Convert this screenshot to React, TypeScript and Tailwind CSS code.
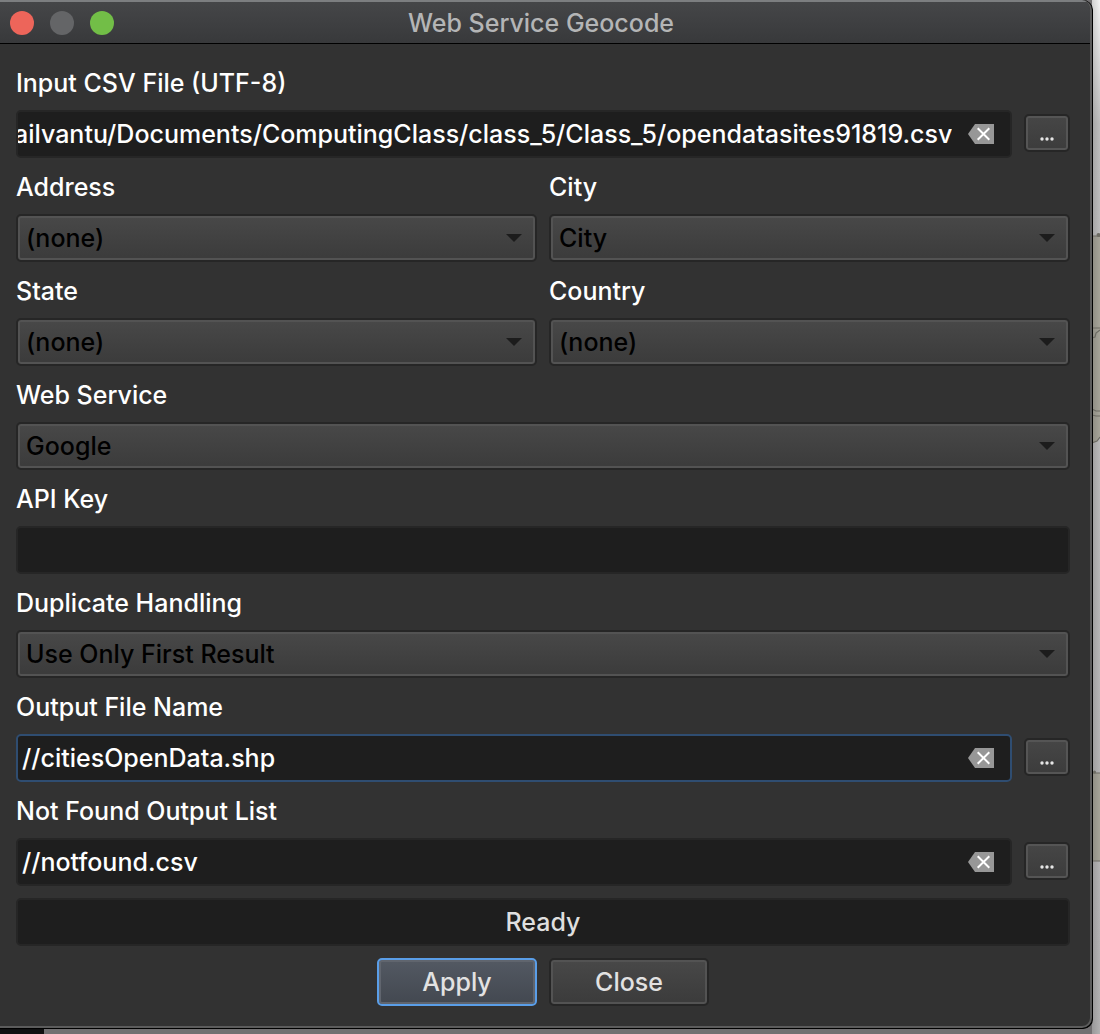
import { useEffect, useRef, useState } from "react";
import type { ReactNode } from "react";

function Label({ htmlFor, children }: { htmlFor: string; children: ReactNode }) {
  return (
    <label htmlFor={htmlFor} className="block h-8 leading-[35px] whitespace-nowrap text-white">
      {children}
    </label>
  );
}

function ClearIcon() {
  return (
    <svg viewBox="0 0 26 20" className="block h-5 w-[26px]" aria-hidden="true">
      <path d="M0 10 L7 0 H26 V20 H7 Z" fill="#979797" />
      <path d="M9.700 4.300 L21.300 15.700 M21.300 4.300 L9.700 15.700" stroke="#fff" strokeWidth="2" />
    </svg>
  );
}

function Ellipsis() {
  return (
    <svg viewBox="0 0 14 4" className="block h-1 w-[14px]" aria-hidden="true">
      <circle cx="2" cy="2" r="1.700" fill="#e6e6e6" />
      <circle cx="7" cy="2" r="1.700" fill="#e6e6e6" />
      <circle cx="12" cy="2" r="1.700" fill="#e6e6e6" />
    </svg>
  );
}

type FileFieldProps = { id: string; label: string; initial: string; active?: boolean; overflowing?: boolean };

function FileField({ id, label, initial, active, overflowing }: FileFieldProps) {
  const [value, setValue] = useState(initial);
  const input = useRef<HTMLInputElement>(null);

  // Long paths show their end, where the file name is.
  useEffect(() => {
    if (overflowing && input.current) input.current.scrollLeft = input.current.scrollWidth;
  }, [overflowing]);

  return (
    <div className="flex flex-col gap-3">
      <Label htmlFor={id}>{label}</Label>
      <div className="flex items-start gap-3">
        <div
          className={
            "flex h-12 min-w-0 flex-1 items-center gap-4 rounded-[5px] border-2 bg-[#1e1e1e] pr-4 " +
            (active ? "border-[#2f4d71]" : "border-[#262626]")
          }
        >
          <input
            ref={input}
            id={id}
            type="text"
            value={value}
            onChange={(e) => setValue(e.target.value)}
            className={"h-full min-w-0 flex-1 bg-transparent text-white outline-none " + (overflowing ? "pl-0" : "pl-1")}
          />
          <button type="button" aria-label={"Clear " + label} onClick={() => setValue("")}>
            <ClearIcon />
          </button>
        </div>
        <button
          type="button"
          aria-label={"Browse for " + label}
          className="mt-1 flex h-[38px] w-[46px] items-end justify-center rounded-[5px] border-2 border-[#262626] bg-linear-to-b from-[#464646] to-[#3c3c3c] pb-[9px] inset-ring-2 inset-ring-[#555555]"
        >
          <Ellipsis />
        </button>
      </div>
    </div>
  );
}

function SelectField({ id, label, options }: { id: string; label: string; options: string[] }) {
  return (
    <div className="flex min-w-0 flex-col gap-3">
      <Label htmlFor={id}>{label}</Label>
      <div className="relative">
        <select
          id={id}
          className="block h-12 w-full appearance-none rounded-[5px] border-2 border-[#262626] bg-linear-to-b from-[#484848] to-[#3b3b3b] pt-0.5 pr-10 pl-2 text-black inset-ring-2 inset-ring-[#535353] outline-none"
        >
          {options.map((o) => (
            <option key={o}>{o}</option>
          ))}
        </select>
        <svg
          viewBox="0 0 16 8"
          className="pointer-events-none absolute top-5 right-[15px] h-2 w-4"
          aria-hidden="true"
        >
          <path d="M0 0 H16 L8 8 Z" fill="#1c1c1c" />
        </svg>
      </div>
    </div>
  );
}

function MapEdge() {
  return (
    <svg
      viewBox="0 0 8 1034"
      preserveAspectRatio="none"
      className="absolute inset-y-0 right-0 h-[1034px] w-2"
      aria-hidden="true"
    >
      <defs>
        <linearGradient id="sky" x1="0" y1="0" x2="0" y2="1">
          <stop offset="0" stopColor="#f4f4f4" />
          <stop offset="0.120" stopColor="#bebebe" />
          <stop offset="1" stopColor="#b2b1b2" />
        </linearGradient>
        <linearGradient id="shade" x1="0" y1="0" x2="1" y2="0">
          <stop offset="0" stopColor="#000" stopOpacity="0.140" />
          <stop offset="1" stopColor="#000" stopOpacity="0" />
        </linearGradient>
      </defs>
      <rect width="8" height="1034" fill="url(#sky)" />
      <path d="M0 236 H8 V438 L5 441 L0 443 Z M0 773 H8 V861 H0 Z" fill="#a5a398" />
      <rect width="8" height="1034" fill="url(#shade)" />
      <g fill="none" stroke="#6c6b63" strokeWidth="1.200">
        <path d="M0 236 H8 M0 328 H8 M0 338 L3 337 L4 333 L8 330 M0 409 L4 411 H8 M0 415 L4 416 H8 M0 443 L5 441 L8 437 M0 773 H8 M0 861 H8" />
      </g>
      <circle cx="6.500" cy="235" r="2" fill="#6c6b63" />
      <circle cx="2.500" cy="772" r="1.500" fill="#6c6b63" />
    </svg>
  );
}

export default function App() {
  return (
    <div className="relative flex min-h-screen flex-col bg-[#727072] font-['Inter',sans-serif] text-[25px] font-medium">
      <MapEdge />
      <main className="relative mr-[7px] rounded-r-[10px] border-r border-b border-black bg-black">
        <div className="overflow-hidden rounded-r-[10px] border-r-2 border-b-2 border-[#5c5c5c] bg-[#323232]">
          <header className="relative flex h-11 items-center border-t-2 border-b border-t-[#7c7e80] border-b-black bg-linear-to-b from-[#454648] to-[#38393b] px-[10px]">
            <div className="flex gap-4">
              <button type="button" aria-label="Close window" className="size-6 rounded-full bg-[#ed655a]" />
              <button type="button" aria-label="Minimize window" className="size-6 rounded-full bg-[#646567]" />
              <button type="button" aria-label="Zoom window" className="size-6 rounded-full bg-[#72be47]" />
            </div>
            <h1 className="pointer-events-none absolute inset-x-0 pt-0.5 pr-2 text-center text-[#b4b5b6]">
              Web Service Geocode
            </h1>
          </header>

          <form className="flex flex-col gap-3 pt-[22px] pr-5 pb-5 pl-4" onSubmit={(e) => e.preventDefault()}>
            <FileField
              id="input-csv"
              label="Input CSV File (UTF-8)"
              initial="ailvantu/Documents/ComputingClass/class_5/Class_5/opendatasites91819.csv"
              overflowing
            />
            <div className="grid grid-cols-2 gap-3">
              <SelectField id="address" label="Address" options={["(none)"]} />
              <SelectField id="city" label="City" options={["City", "(none)"]} />
              <SelectField id="state" label="State" options={["(none)"]} />
              <SelectField id="country" label="Country" options={["(none)"]} />
            </div>
            <SelectField id="service" label="Web Service" options={["Google"]} />
            <div className="flex flex-col gap-3">
              <Label htmlFor="api-key">API Key</Label>
              <input
                id="api-key"
                type="text"
                className="h-12 w-full rounded-[5px] border-2 border-[#262626] bg-[#1e1e1e] px-1 text-white outline-none"
              />
            </div>
            <SelectField id="duplicates" label="Duplicate Handling" options={["Use Only First Result"]} />
            <FileField id="output-file" label="Output File Name" initial="//citiesOpenData.shp" active />
            <FileField id="not-found" label="Not Found Output List" initial="//notfound.csv" />
            <output className="flex h-12 items-center justify-center rounded-[5px] border-2 border-[#262626] bg-[#1e1e1e] pt-0.5 text-[#dfdfdf]">
              Ready
            </output>
            <div className="flex justify-center gap-3">
              <button
                type="submit"
                className="h-12 w-40 rounded-[5px] border-2 border-[#5a9ee8] bg-linear-to-b from-[#535963] to-[#434850] pt-0.5 text-[#e2e2e2] inset-ring-2 inset-ring-[#60656e]"
              >
                Apply
              </button>
              <button
                type="button"
                className="h-12 w-40 rounded-[5px] border-2 border-[#262626] bg-linear-to-b from-[#484848] to-[#3b3b3b] pt-0.5 text-[#e2e2e2] inset-ring-2 inset-ring-[#535353]"
              >
                Close
              </button>
            </div>
          </form>
        </div>
      </main>
      <div className="flex flex-1">
        <div className="w-11 bg-[#101011]" />
      </div>
    </div>
  );
}
